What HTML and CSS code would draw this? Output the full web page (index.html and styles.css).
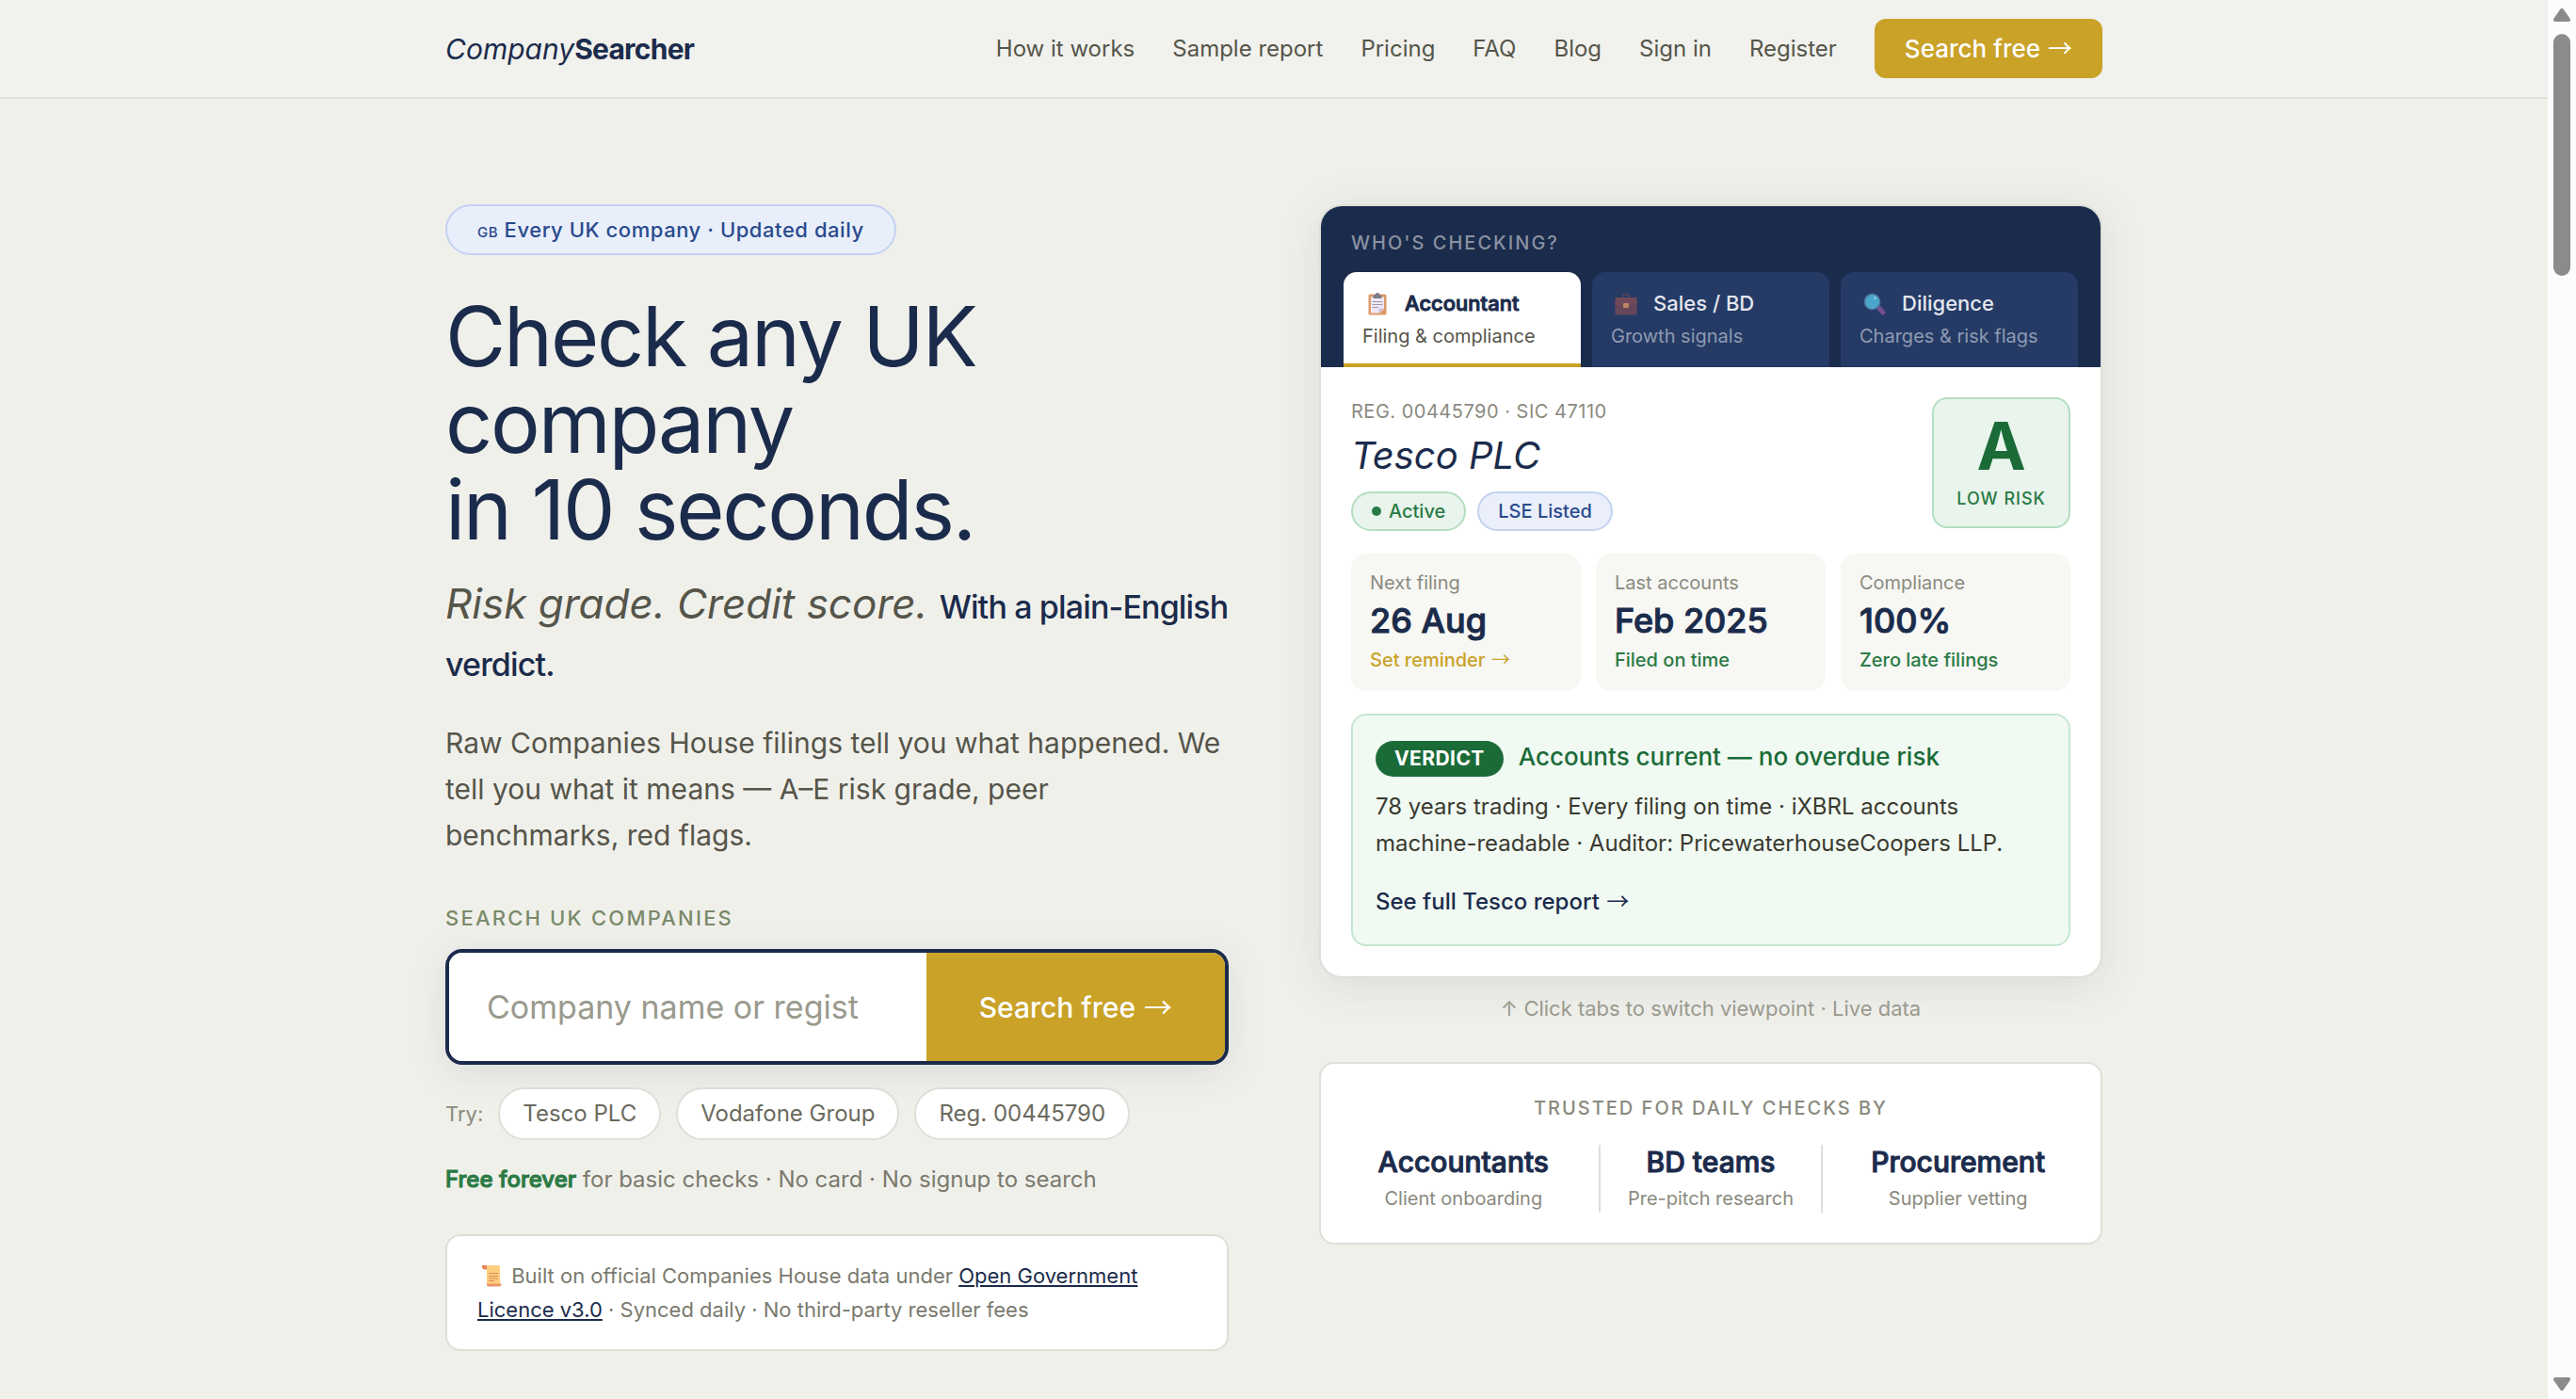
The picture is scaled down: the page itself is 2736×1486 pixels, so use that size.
FILE: index.html
```html
<!DOCTYPE html>
<html lang="en-GB">
<head>
    <meta charset="UTF-8">
    <meta name="viewport" content="width=device-width, initial-scale=1.0">
    <title>CompanySearcher</title>
    <link rel="stylesheet" href="styles.css">
</head>
<body>
    <div class="page">
        <header class="site-header">
            <div class="container header-inner">
                <a href="#" class="brand"><em>Company</em><strong>Searcher</strong></a>
                <nav class="nav">
                    <a href="#">How it works</a>
                    <a href="#">Sample report</a>
                    <a href="#">Pricing</a>
                    <a href="#">FAQ</a>
                    <a href="#">Blog</a>
                    <a href="#">Sign in</a>
                    <a href="#">Register</a>
                    <a href="#" class="nav-cta">Search free <span class="arrow">→</span></a>
                </nav>
            </div>
        </header>

        <main class="container hero">
            <section class="hero-left">
                <div class="badge"><span class="flag">GB</span> Every UK company · Updated daily</div>
                <h1>Check any UK company<br>in 10 seconds.</h1>
                <p class="tagline"><em>Risk grade. Credit score.</em> <strong>With a plain-English verdict.</strong></p>
                <p class="lead">Raw Companies House filings tell you what happened. We tell you what it means — A–E risk grade, peer benchmarks, red flags.</p>

                <form>
                    <label class="search-label" for="q">Search UK companies</label>
                    <div class="search-box">
                        <input type="text" id="q" name="q" placeholder="Company name or regist">
                        <button type="submit">Search free <span class="arrow">→</span></button>
                    </div>
                </form>

                <div class="try-row">
                    <span>Try:</span>
                    <button type="button" class="chip">Tesco PLC</button>
                    <button type="button" class="chip">Vodafone Group</button>
                    <button type="button" class="chip">Reg. 00445790</button>
                </div>
                <p class="free-note"><strong>Free forever</strong> for basic checks · No card · No signup to search</p>

                <div class="licence">
                    <svg class="emoji" viewBox="0 0 24 24" aria-hidden="true">
                        <path d="M3 1h16a2 2 0 0 1 2 2v18H7V5H5z" fill="#ffcf7d"/>
                        <path d="M2 1h5v4.500H5A3 3 0 0 1 2 2.500z" fill="#e5845b"/>
                        <path d="M7 20.500h15.500v1a2 2 0 0 1-2 2H9a2 2 0 0 1-2-2z" fill="#ea9466"/>
                        <path d="M9 9.500h10M9 12.500h10M9 15h10M9 17.500h6" stroke="#d98a58" stroke-width="1.200"/>
                    </svg>
                    Built on official Companies House data under <a href="#">Open Government Licence v3.0</a> · Synced daily · No third-party reseller fees
                </div>
            </section>

            <section class="hero-right">
                <div class="report">
                    <div class="report-head">
                        <div class="report-label">Who's checking?</div>
                        <div class="tabs" role="tablist">
                            <button type="button" class="tab active" role="tab" aria-selected="true">
                                <span class="tab-title">
                                    <svg class="emoji" viewBox="0 0 24 24" aria-hidden="true">
                                        <rect x="2.500" y="1.500" width="19" height="22" rx="1.500" fill="#dd9a6c"/>
                                        <path d="M5 4.500h14v12.500l-5 4.500H5z" fill="#efe8f4"/>
                                        <path d="M19 16.500l-5.500 5.500V16.500z" fill="#cdbfdc"/>
                                        <path d="M9.500 2.500a2.500 2.500 0 0 1 5 0h2V6h-9V2.500z" fill="#7d7a8a"/>
                                        <path d="M6.500 9.500h11M6.500 12.500h11M6.500 15.500h6.500" stroke="#9d96ad" stroke-width="1.200"/>
                                    </svg>
                                    Accountant
                                </span>
                                <span class="tab-sub">Filing &amp; compliance</span>
                            </button>
                            <button type="button" class="tab" role="tab" aria-selected="false">
                                <span class="tab-title">
                                    <svg class="emoji" viewBox="0 0 24 24" aria-hidden="true">
                                        <path d="M9 5.500V4.500a3 3 0 0 1 6 0v1" fill="none" stroke="#604554" stroke-width="1.400"/>
                                        <rect x="0.500" y="5" width="23" height="18.500" rx="1" fill="#66475a"/>
                                        <path d="M1 5h22l.500 8H.500z" fill="#71495a"/>
                                        <rect x="9" y="11" width="6" height="5" rx="1" fill="#c08466"/>
                                    </svg>
                                    Sales / BD
                                </span>
                                <span class="tab-sub">Growth signals</span>
                            </button>
                            <button type="button" class="tab" role="tab" aria-selected="false">
                                <span class="tab-title">
                                    <svg class="emoji" viewBox="0 0 24 24" aria-hidden="true">
                                        <path d="M17 16.500l4 4.500" stroke="#70508e" stroke-width="5" stroke-linecap="round"/>
                                        <circle cx="9.500" cy="9.500" r="8.200" fill="#4ca6cb" stroke="#4a6f9a" stroke-width="1.500"/>
                                        <circle cx="12.500" cy="5.500" r="1.200" fill="#9ad4e8"/>
                                    </svg>
                                    Diligence
                                </span>
                                <span class="tab-sub">Charges &amp; risk flags</span>
                            </button>
                        </div>
                    </div>

                    <div class="report-body">
                        <div class="company">
                            <div>
                                <div class="reg">REG. 00445790 · SIC 47110</div>
                                <h2>Tesco PLC</h2>
                                <div class="pills">
                                    <span class="pill pill-green"><i class="dot"></i>Active</span>
                                    <span class="pill pill-blue">LSE Listed</span>
                                </div>
                            </div>
                            <div class="grade">
                                <span class="grade-letter">A</span>
                                <span class="grade-text">LOW RISK</span>
                            </div>
                        </div>

                        <div class="stats">
                            <div class="stat">
                                <div class="stat-label">Next filing</div>
                                <div class="stat-value">26 Aug</div>
                                <div class="stat-note gold">Set reminder <span class="arrow">→</span></div>
                            </div>
                            <div class="stat">
                                <div class="stat-label">Last accounts</div>
                                <div class="stat-value">Feb 2025</div>
                                <div class="stat-note">Filed on time</div>
                            </div>
                            <div class="stat">
                                <div class="stat-label">Compliance</div>
                                <div class="stat-value">100%</div>
                                <div class="stat-note">Zero late filings</div>
                            </div>
                        </div>

                        <div class="verdict">
                            <div class="verdict-head">
                                <span class="verdict-tag">VERDICT</span>
                                <span class="verdict-title">Accounts current — no overdue risk</span>
                            </div>
                            <p>78 years trading · Every filing on time · iXBRL accounts machine-readable · Auditor: PricewaterhouseCoopers LLP.</p>
                            <a href="#">See full Tesco report <span class="arrow">→</span></a>
                        </div>
                    </div>
                </div>

                <p class="hint">↑ Click tabs to switch viewpoint · Live data</p>

                <div class="trusted">
                    <div class="trusted-label">Trusted for daily checks by</div>
                    <div class="trusted-grid">
                        <div class="trusted-item"><strong>Accountants</strong><span>Client onboarding</span></div>
                        <div class="trusted-item middle"><strong>BD teams</strong><span>Pre-pitch research</span></div>
                        <div class="trusted-item"><strong>Procurement</strong><span>Supplier vetting</span></div>
                    </div>
                </div>
            </section>
        </main>
    </div>

    <div class="scrollbar" aria-hidden="true">
        <svg class="scroll-arrow" viewBox="0 0 18 14"><path d="M9 2L16 12H2z" fill="#8b8b8b" stroke="#8b8b8b" stroke-width="4" stroke-linejoin="round"/></svg>
        <div class="scroll-thumb"></div>
        <svg class="scroll-arrow" viewBox="0 0 18 14"><path d="M9 12L16 2H2z" fill="#8b8b8b" stroke="#8b8b8b" stroke-width="4" stroke-linejoin="round"/></svg>
    </div>
</body>
</html>
```

FILE: styles.css
```css
* {
    box-sizing: border-box;
}
body {
    display: flex;
    height: 100vh;
    margin: 0;
    overflow: hidden;
    font-family: Inter, "Liberation Sans", sans-serif;
    font-size: 24px;
    line-height: 36px;
    color: #1b2b4b;
    background: #f0f0eb;
}
h1, h2, p {
    margin: 0;
}
button, input {
    font-family: inherit;
}
button {
    cursor: pointer;
}
.page {
    flex: 1;
    min-width: 0;
}
.container {
    max-width: 1760px;
    margin: 0 auto;
}
.emoji {
    width: 24px;
    height: 24px;
}
.arrow {
    margin-left: 1px;
    font-family: "Noto Sans CJK SC", sans-serif;
    font-weight: 400;
    line-height: 1;
}

/* Header */
.site-header {
    border-bottom: 2px solid #e0e0da;
    background: #f1f1ed;
}
.header-inner {
    display: flex;
    align-items: center;
    justify-content: space-between;
    padding: 20px 0;
}
.brand {
    font-size: 30px;
    color: #1b2b4b;
    text-decoration: none;
}
.brand em {
    font-weight: 400;
}
.brand strong {
    font-weight: 700;
    letter-spacing: -0.025em;
}
.nav {
    display: flex;
    align-items: center;
    gap: 40px;
}
.nav a {
    color: #55554a;
    text-decoration: none;
}
.nav .nav-cta {
    padding: 12px 32px;
    font-size: 26px;
    line-height: 39px;
    font-weight: 500;
    color: #ffffff;
    background: #c9a227;
    border-radius: 12px;
}

/* Hero */
.hero {
    display: grid;
    grid-template-columns: 1fr 1fr;
    gap: 96px;
    align-items: start;
    padding-top: 112px;
}
.badge {
    width: fit-content;
    padding: 8px 32px;
    font-size: 22px;
    line-height: 34px;
    font-weight: 500;
    letter-spacing: 0.025em;
    color: #2a4a8c;
    background: #e8effb;
    border: 2px solid #c3d2f0;
    border-radius: 40px;
}
.flag {
    font-size: 15px;
    line-height: 1;
}
h1 {
    margin-top: 40px;
    font-size: 88px;
    line-height: 92px;
    font-weight: 400;
    letter-spacing: -0.025em;
}
.tagline {
    margin-top: 24px;
    font-size: 44px;
    line-height: 61px;
}
.tagline em {
    color: #55554a;
}
.tagline strong {
    font-size: 34px;
    line-height: 40px;
    font-weight: 500;
    letter-spacing: -0.025em;
}
.lead {
    margin-top: 32px;
    font-size: 30px;
    line-height: 49px;
    color: #55554a;
}
.search-label {
    display: block;
    margin: 47px 0 16px;
    font-size: 22px;
    line-height: 33px;
    font-weight: 500;
    letter-spacing: 0.1em;
    text-transform: uppercase;
    color: #7a8a6a;
}
.search-box {
    display: flex;
    overflow: hidden;
    background: #ffffff;
    border: 4px solid #1b2b4b;
    border-radius: 18px;
    box-shadow: 0 8px 40px rgba(27, 43, 75, 0.1);
}
.search-box input {
    flex: 1;
    min-width: 0;
    padding: 32px 40px;
    font-size: 34px;
    line-height: 51px;
    border: none;
    outline: none;
    background: #ffffff;
}
.search-box input::placeholder {
    color: #9a9a8e;
}
.search-box button {
    padding: 0 56px;
    font-size: 30px;
    font-weight: 500;
    color: #ffffff;
    background: #c9a227;
    border: none;
}
.try-row {
    display: flex;
    align-items: center;
    gap: 16px;
    margin-top: 24px;
    font-size: 22px;
    color: #8a8a7e;
}
.chip {
    padding: 8px 24px;
    font-size: 24px;
    line-height: 36px;
    color: #6a6a5e;
    background: #ffffff;
    border: 2px solid #dedfd8;
    border-radius: 40px;
}
.free-note {
    margin-top: 24px;
    color: #7a7a6e;
}
.free-note strong {
    font-weight: 500;
    -webkit-text-stroke: 1px;
    color: #2a7a44;
}
.licence {
    margin-top: 40px;
    padding: 24px 32px;
    font-size: 22px;
    line-height: 36px;
    color: #7a7a6e;
    background: #ffffff;
    border: 2px solid #dedfd8;
    border-radius: 16px;
}
.licence .emoji {
    vertical-align: -4px;
    margin: 0 3px;
}
.licence a {
    color: #1b2b4b;
}

/* Report card */
.report {
    overflow: hidden;
    background: #ffffff;
    border: 2px solid #dedfd8;
    border-radius: 24px;
    box-shadow: 0 8px 48px rgba(27, 43, 75, 0.1);
}
.report-head {
    padding: 24px 24px 0;
    background: #1b2b4b;
}
.report-label {
    padding: 0 8px;
    font-size: 20px;
    line-height: 30px;
    font-weight: 500;
    letter-spacing: 0.1em;
    text-transform: uppercase;
    color: #8a92a2;
}
.tabs {
    display: grid;
    grid-template-columns: repeat(3, 1fr);
    gap: 12px;
    margin-top: 16px;
}
.tab {
    padding: 16px 20px 14px;
    text-align: left;
    color: #e4e7ee;
    background: #253b66;
    border: none;
    border-bottom: 4px solid #253b66;
    border-radius: 14px 14px 0 0;
}
.tab.active {
    color: #1b2b4b;
    background: #ffffff;
    border-bottom-color: #c9a227;
}
.tab-title {
    display: flex;
    align-items: center;
    gap: 17px;
    font-size: 22px;
    line-height: 35px;
    font-weight: 500;
}
.tab.active .tab-title {
    -webkit-text-stroke: 1px;
}
.tab-title .emoji {
    margin-left: 4px;
}
.tab-sub {
    display: block;
    margin-top: 2px;
    font-size: 20px;
    line-height: 30px;
    color: #8f9ab0;
}
.tab.active .tab-sub {
    color: #55554a;
}
.report-body {
    padding: 32px;
}
.company {
    display: flex;
    align-items: flex-start;
    justify-content: space-between;
}
.reg {
    font-size: 20px;
    line-height: 30px;
    letter-spacing: 0.025em;
    color: #8a8a7e;
}
h2 {
    margin: 8px 0 14px;
    font-size: 40px;
    line-height: 48px;
    font-weight: 400;
    font-style: italic;
}
.pills {
    display: flex;
    gap: 12px;
}
.pill {
    display: flex;
    align-items: center;
    gap: 8px;
    padding: 4px 20px;
    font-size: 20px;
    line-height: 30px;
    font-weight: 500;
    border: 2px solid;
    border-radius: 24px;
}
.pill-green {
    color: #2a7a44;
    background: #e8f4ec;
    border-color: #b4dec0;
}
.pill-blue {
    color: #2a4a8c;
    background: #eaeffb;
    border-color: #c3d2f0;
}
.dot {
    width: 10px;
    height: 10px;
    border-radius: 50%;
    background: #2a7a44;
}
.grade {
    display: flex;
    flex-direction: column;
    align-items: center;
    padding: 16px 24px;
    background: #e8f4ec;
    border: 2px solid #b4dec0;
    border-radius: 16px;
}
.grade-letter {
    font-size: 70px;
    line-height: 68px;
    font-weight: 700;
    color: #1b6b38;
}
.grade-text {
    margin-top: 8px;
    font-size: 18px;
    line-height: 27px;
    font-weight: 500;
    letter-spacing: 1px;
    color: #2a7a44;
}
.stats {
    display: grid;
    grid-template-columns: repeat(3, 1fr);
    gap: 16px;
    margin: 24px 0;
}
.stat {
    padding: 16px 20px 18px;
    font-size: 20px;
    line-height: 30px;
    background: #f7f7f4;
    border-radius: 16px;
}
.stat-label {
    color: #8a8a7e;
}
.stat-value {
    margin: 4px 0 6px;
    font-size: 36px;
    line-height: 42px;
    font-weight: 500;
    -webkit-text-stroke: 1px;
}
.stat-note {
    font-weight: 500;
    color: #2a7a44;
}
.stat-note.gold {
    color: #c9a227;
}
.verdict {
    padding: 24px 24px 27px;
    background: #f0f9f2;
    border: 2px solid #c6e6d0;
    border-radius: 16px;
}
.verdict-head {
    display: flex;
    align-items: baseline;
    gap: 16px;
}
.verdict-tag {
    padding: 4px 20px;
    font-size: 21px;
    line-height: 30px;
    font-weight: 700;
    letter-spacing: 0.02em;
    color: #ffffff;
    background: #1b6b38;
    border-radius: 20px;
}
.verdict-title {
    font-size: 26px;
    line-height: 39px;
    font-weight: 500;
    color: #1b6b38;
}
.verdict p {
    margin: 12px 0 25px;
    line-height: 39px;
    color: #3a3a30;
}
.verdict a {
    display: block;
    font-weight: 500;
    color: #1b2b4b;
    text-decoration: none;
}
.hint {
    margin: 16px 0 40px;
    font-size: 22px;
    line-height: 33px;
    text-align: center;
    color: #9a9a8e;
}

/* Trusted by */
.trusted {
    padding: 32px;
    text-align: center;
    background: #ffffff;
    border: 2px solid #dedfd8;
    border-radius: 16px;
}
.trusted-label {
    font-size: 20px;
    line-height: 30px;
    font-weight: 500;
    letter-spacing: 0.1em;
    text-transform: uppercase;
    color: #8a8a7e;
}
.trusted-grid {
    display: grid;
    grid-template-columns: repeat(3, 1fr);
    gap: 24px;
    margin-top: 24px;
}
.trusted-item.middle {
    border-left: 2px solid #dedfd8;
    border-right: 2px solid #dedfd8;
}
.trusted-item strong {
    display: block;
    margin-bottom: 6px;
    font-size: 30px;
    line-height: 36px;
    font-weight: 500;
    -webkit-text-stroke: 1px;
}
.trusted-item span {
    display: block;
    font-size: 20px;
    line-height: 30px;
    color: #8a8a7e;
}

/* Scrollbar */
.scrollbar {
    display: flex;
    flex-direction: column;
    align-items: center;
    width: 30px;
    padding: 9px 0;
    background: #fcfcfc;
}
.scroll-arrow {
    width: 18px;
    height: 14px;
}
.scroll-thumb {
    width: 18px;
    height: 257px;
    margin: 13px 0 auto;
    background: #8b8b8b;
    border-radius: 9px;
}
```
